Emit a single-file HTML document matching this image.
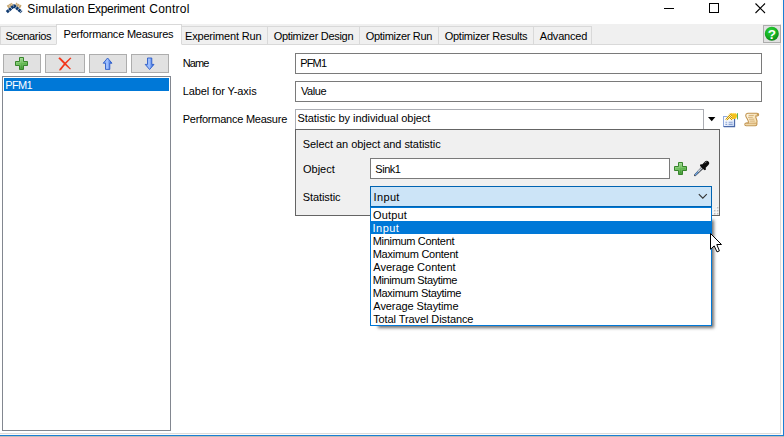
<!DOCTYPE html>
<html>
<head>
<meta charset="utf-8">
<title>Simulation Experiment Control</title>
<style>
html,body{margin:0;padding:0;}
body{width:784px;height:437px;overflow:hidden;background:#fff;position:relative;font-family:"Liberation Sans",sans-serif;font-size:11px;color:#000;}
.a{position:absolute;box-sizing:border-box;}
.t{position:absolute;white-space:nowrap;line-height:13px;height:13px;}
.tt{top:1px;font-size:12px;line-height:16px;height:16px;}
#strip{left:0;top:24px;width:781px;height:21px;background:#f0f0f0;}
.tab{position:absolute;box-sizing:border-box;top:26px;height:19px;border:1px solid #d9d9d9;border-left:none;background:#f0f0f0;}
.btn{position:absolute;box-sizing:border-box;top:54px;height:19px;background:#e1e1e1;border:1px solid #adadad;}
.inp{position:absolute;box-sizing:border-box;background:#fff;border:1px solid #7a7a7a;}
</style>
</head>
<body>
<!-- title bar -->
<svg class="a" style="left:0;top:0" width="28" height="16" viewBox="0 0 28 16">
 <path d="M7.6 7L12.6 4" stroke="#c9a873" stroke-width="3.2" fill="none" stroke-dasharray="2 0.4"/>
 <path d="M20.8 7L15.6 4" stroke="#c9a873" stroke-width="3.2" fill="none" stroke-dasharray="2 0.4"/>
 <path d="M6.8 12.1L14 5.8L21.5 12.1" fill="none" stroke="#0f3a70" stroke-width="3.1" stroke-dasharray="2.6 0.5" stroke-linejoin="round"/>
</svg>
<div class="a" id="title" style="left:0;top:0;width:300px;height:20px"><span class="t tt" style="left:27.26px;letter-spacing:0.122px">Simulation</span> <span class="t tt" style="left:87.44px;letter-spacing:-0.35px">Experiment</span> <span class="t tt" style="left:149.34px;letter-spacing:0.223px">Control</span></div>
<svg class="a" style="left:660px;top:0" width="124" height="18" viewBox="0 0 124 18">
 <path d="M4 8.5H14" stroke="#000" stroke-width="1" fill="none"/>
 <rect x="49.5" y="3.5" width="9" height="9" fill="none" stroke="#000" stroke-width="1"/>
 <path d="M95.5 3.5L105 13M105 3.5L95.5 13" stroke="#000" stroke-width="1.1" fill="none"/>
</svg>

<!-- tab strip -->
<div class="a" id="strip"></div>
<div class="a" style="left:0;top:44px;width:781px;height:1px;background:#d9d9d9"></div>
<div class="tab" style="left:0;width:57px;border-left:1px solid #d9d9d9"></div>
<div class="tab" style="left:181px;width:87px"></div>
<div class="tab" style="left:268px;width:92px"></div>
<div class="tab" style="left:360px;width:79px"></div>
<div class="tab" style="left:439px;width:95px"></div>
<div class="tab" style="left:534px;width:58px"></div>
<div class="tab" style="left:56px;top:24px;width:126px;height:21px;background:#fff;border-left:1px solid #d9d9d9;border-bottom:1px solid #fff"></div>
<div class="t" style="top:30px;left:5.54px;letter-spacing:-0.373px">Scenarios</div>
<div class="t" style="top:28px;left:63.52px;letter-spacing:-0.222px">Performance Measures</div>
<div class="t" style="top:30px;left:185.02px;letter-spacing:-0.182px">Experiment Run</div>
<div class="t" style="top:30px;left:273.64px;letter-spacing:-0.298px">Optimizer Design</div>
<div class="t" style="top:30px;left:365.84px;letter-spacing:-0.315px">Optimizer Run</div>
<div class="t" style="top:30px;left:444.64px;letter-spacing:-0.239px">Optimizer Results</div>
<div class="t" style="top:30px;left:539.76px;letter-spacing:-0.184px">Advanced</div>

<!-- help button -->
<div class="a" style="left:763px;top:25px;width:18px;height:18px;background:#e1e1e1;border:1px solid #adadad;z-index:3"></div>
<svg class="a" style="left:764px;top:26px;z-index:4" width="16" height="16" viewBox="0 0 16 16">
 <defs><radialGradient id="hg" cx="0.42" cy="0.3" r="0.75"><stop offset="0" stop-color="#2fd23a"/><stop offset="0.55" stop-color="#14b022"/><stop offset="1" stop-color="#0b7f16"/></radialGradient></defs>
 <circle cx="7.8" cy="7.8" r="7" fill="url(#hg)"/>
 <text x="7.9" y="12.6" font-family="Liberation Sans, sans-serif" font-weight="bold" font-size="13.5" fill="#fff" text-anchor="middle">?</text>
</svg>

<!-- left buttons -->
<div class="btn" style="left:3px;width:38px"></div>
<div class="btn" style="left:45px;width:40px"></div>
<div class="btn" style="left:89px;width:38px"></div>
<div class="btn" style="left:131px;width:38px"></div>
<svg class="a" style="left:15px;top:57px" width="13" height="13" viewBox="0 0 13 13">
 <defs><linearGradient id="pg" x1="0.3" y1="0" x2="0.6" y2="1"><stop offset="0" stop-color="#a9df9b"/><stop offset="0.5" stop-color="#69bd57"/><stop offset="1" stop-color="#2f8c22"/></linearGradient></defs>
 <path d="M4.5 0.5h4v4h4v4h-4v4h-4v-4h-4v-4h4z" fill="url(#pg)" stroke="#38852c" stroke-width="1"/><path d="M5.5 1.5h2v4h4v2h-4v4h-2v-4h-4v-2h4z" fill="none" stroke="#ffffff" stroke-opacity="0.10" stroke-width="1"/>
</svg>
<svg class="a" style="left:58px;top:57px" width="14" height="14" viewBox="0 0 14 14">
 <path d="M0.3 1.2L1.9 0.2Q6.6 4.6 12.9 11.7L12.1 12.6Q6 7.4 0.3 1.2z" fill="#f2361a"/><path d="M13.4 1.3L12.3 0.5Q6.6 5.4 1.5 11.9L1.1 13.5L2.9 13.2Q7.4 7 13.4 1.3z" fill="#f2361a"/>
</svg>
<svg class="a" style="left:102px;top:57px" width="12" height="13" viewBox="0 0 12 13">
 <defs><linearGradient id="ag" x1="0" y1="0" x2="1" y2="0"><stop offset="0.15" stop-color="#78a4f4"/><stop offset="0.45" stop-color="#a8c6ff"/><stop offset="0.9" stop-color="#2f66dc"/></linearGradient></defs>
 <path d="M5.6 1L10 6.2H7.8V12.4H3.5V6.2H1.2z" fill="url(#ag)" stroke="#2c5cc8" stroke-width="0.9" stroke-linejoin="round"/>
</svg>
<svg class="a" style="left:144px;top:57px" width="12" height="13" viewBox="0 0 12 13">
 <path d="M5.6 12.5L10 7.4H7.8V1H3.5V7.4H1.2z" fill="url(#ag)" stroke="#2c5cc8" stroke-width="0.9" stroke-linejoin="round"/>
</svg>

<!-- list box -->
<div class="a" style="left:2px;top:76px;width:169px;height:355px;border:1px solid #828790;background:#fff"></div>
<div class="a" style="left:4px;top:78px;width:165px;height:13px;background:#0078d7"></div>
<div class="t" style="top:79px;color:#fff;left:5.22px;letter-spacing:-0.608px">PFM1</div>

<!-- form -->
<div class="t" style="top:57px;left:182.72px;letter-spacing:-0.905px">Name</div>
<div class="t" style="top:85px;left:182.72px;letter-spacing:-0.087px">Label for Y-axis</div>
<div class="t" style="top:113px;left:182.72px;letter-spacing:-0.236px">Performance Measure</div>
<div class="inp" style="left:295px;top:53px;width:467px;height:21px"></div>
<div class="inp" style="left:295px;top:81px;width:467px;height:21px"></div>
<div class="t" style="top:57px;left:300.21px;letter-spacing:-0.842px">PFM1</div>
<div class="t" style="top:85px;left:301.02px;letter-spacing:-0.431px">Value</div>
<div class="inp" style="left:295px;top:109px;width:409px;height:21px;border-color:#abadb3"></div>
<div class="t" style="top:112px;left:297.53px;letter-spacing:-0.058px">Statistic by individual object</div>
<svg class="a" style="left:708px;top:117px" width="8" height="5" viewBox="0 0 8 5"><path d="M0 0H7.4L3.7 4.2z" fill="#000"/></svg>
<svg class="a" style="left:722px;top:112px" width="17" height="16" viewBox="0 0 17 16">
 <defs><linearGradient id="dg" x1="0" y1="0" x2="1" y2="1"><stop offset="0" stop-color="#ffffff"/><stop offset="0.55" stop-color="#edf2fc"/><stop offset="1" stop-color="#b9cdf0"/></linearGradient>
 <pattern id="chk" width="2" height="2" patternUnits="userSpaceOnUse"><rect width="2" height="2" fill="#fdeea0"/><rect width="1" height="1" fill="#c8920c"/><rect x="1" y="1" width="1" height="1" fill="#c8920c"/></pattern></defs>
 <rect x="1.5" y="4.5" width="11" height="10" fill="url(#dg)" stroke="#8fa9de" stroke-width="1"/>
 <path d="M1.8 14.6H12.6V5" fill="none" stroke="#4a68a8" stroke-width="1.1"/>
 <path d="M3.4 10.2H5.2M6.6 10.2H10.6M3.4 12.4H5.2M6.6 12.4H10.6" stroke="#8aa3d4" stroke-width="1.1" fill="none"/>
 <path d="M3.2 7.6L7.4 1.8L10 1.4L12 4L12.8 6.6L10.9 7L9.5 8.6L7.8 6.6L5.2 8.6z" fill="url(#chk)"/>
 <path d="M7.6 1.7Q10 0.8 13.2 1.1Q15.1 1.6 15.1 3.8Q15 6.4 12.8 7Q10.8 7.4 10 6.4Q10.6 4.8 9.8 3.4Q9 2.3 7.6 1.7z" fill="#f4c21c"/>
 <path d="M9.8 1.7Q11.6 1.1 13.4 1.7" stroke="#fbe588" stroke-width="0.9" fill="none"/>
 <rect x="15" y="1.2" width="1" height="6.2" fill="#58b45c"/>
</svg>
<svg class="a" style="left:744px;top:112px" width="16" height="15" viewBox="0 0 16 15">
 <defs><linearGradient id="sg" x1="0" y1="0" x2="1" y2="0.3"><stop offset="0" stop-color="#fffbee"/><stop offset="1" stop-color="#f6ddab"/></linearGradient></defs>
 <path d="M3.8 1.3H13Q14.7 1.3 14.7 2.7Q14.6 4 13 3.9L11.8 3.8Q11.6 5.6 12.6 7.4Q13.4 9 12.9 10.7V12.4Q12.8 13.7 11.4 13.7H2.2Q0.8 13.6 0.8 12.4Q0.8 11.1 2.2 11H4.3Q4.8 9.4 3.7 7.7Q1.6 5.2 1.7 3.3Q1.9 1.5 3.8 1.3z" fill="url(#sg)" stroke="#c0924c" stroke-width="1.05" stroke-linejoin="round"/>
 <path d="M2.2 11.2H12.8" stroke="#c89a56" stroke-width="0.9" fill="none"/>
 <path d="M1.6 12.6H11.8" stroke="#e9cf9c" stroke-width="0.8" fill="none"/>
 <circle cx="13.4" cy="2.7" r="0.7" fill="#c0924c"/>
 <path d="M4.6 3.4H9.8M4 5.3H8.8M5 7.2H10.2M5.6 9.1H10.8" stroke="#cfa96c" stroke-width="0.9" fill="none"/>
</svg>

<!-- popup panel -->
<div class="a" style="left:295px;top:129px;width:425px;height:87px;background:#f0f0f0;border:1px solid #646464"></div>
<div class="t" style="top:138px;left:302.73px;letter-spacing:-0.05px">Select an object and statistic</div>
<div class="t" style="top:163px;left:302.94px;letter-spacing:0.022px">Object</div>
<div class="t" style="top:191px;left:302.73px;letter-spacing:-0.082px">Statistic</div>
<div class="inp" style="left:370px;top:158px;width:300px;height:21px"></div>
<div class="t" style="top:163px;left:375.34px;letter-spacing:-0.489px">Sink1</div>
<svg class="a" style="left:674px;top:162px" width="13" height="13" viewBox="0 0 13 13">
 <path d="M4.5 0.5h4v4h4v4h-4v4h-4v-4h-4v-4h4z" fill="url(#pg)" stroke="#38852c" stroke-width="1"/><path d="M5.5 1.5h2v4h4v2h-4v4h-2v-4h-4v-2h4z" fill="none" stroke="#ffffff" stroke-opacity="0.10" stroke-width="1"/>
</svg>
<svg class="a" style="left:693px;top:160px" width="17" height="17" viewBox="0 0 17 17">
 <path d="M1.3 14.6L8.2 6.9L10.2 8.9L2.6 15.9Q1.6 16.4 1.1 15.8Q0.8 15.2 1.3 14.6z" fill="#3a3f48"/>
 <path d="M2.4 14.7L5.6 11.3" stroke="#6ea4e0" stroke-width="1.3" fill="none" stroke-linecap="round"/>
 <path d="M5.6 11.3L8.9 7.9" stroke="#cfd6de" stroke-width="1.3" fill="none" stroke-linecap="round"/>
 <path d="M8.2 5.4L11.8 9" stroke="#0c0c0c" stroke-width="2.4" fill="none" stroke-linecap="round"/>
 <path d="M10.8 6.2L13.7 3.3" stroke="#0c0c0c" stroke-width="4.8" fill="none" stroke-linecap="round"/>
 <path d="M12 2.8L13.4 1.9" stroke="#707070" stroke-width="1" fill="none" stroke-linecap="round"/>
</svg>
<svg class="a" style="left:711px;top:206px" width="9" height="10" viewBox="0 0 9 10">
 <g fill="#bdbdbd"><rect x="6" y="1" width="1.4" height="1.4"/><rect x="3" y="4" width="1.4" height="1.4"/><rect x="6" y="4" width="1.4" height="1.4"/><rect x="3" y="7" width="1.4" height="1.4"/><rect x="6" y="7" width="1.4" height="1.4"/></g>
 <g fill="#ffffff"><rect x="5.2" y="0.2" width="1" height="1"/><rect x="2.2" y="3.2" width="1" height="1"/><rect x="5.2" y="3.2" width="1" height="1"/><rect x="2.2" y="6.2" width="1" height="1"/><rect x="5.2" y="6.2" width="1" height="1"/></g>
</svg>
<div class="a" style="left:370px;top:186px;width:342px;height:21px;background:#cce4f7;border:1px solid #0063b1"></div>
<div class="t" style="top:191px;left:373.52px;letter-spacing:0.359px">Input</div>
<svg class="a" style="left:698px;top:193px" width="10" height="7" viewBox="0 0 10 7"><path d="M0.8 1.2L4.8 5.2L8.8 1.2" stroke="#333" stroke-width="1.1" fill="none"/></svg>

<!-- dropdown list -->
<div class="a" style="left:376px;top:218px;width:336px;height:108px;background:#777;box-shadow:2px 2px 3px 0 rgba(0,0,0,0.56)"></div>
<div class="a" style="left:370px;top:207px;width:342px;height:119px;background:#fff;border:1px solid #0078d7"></div>
<div class="a" style="left:371px;top:221px;width:341px;height:13px;background:#0078d7"></div>
<div class="t" style="top:209px;left:373.04px;letter-spacing:0.144px">Output</div>
<div class="t" style="top:222px;color:#fff;left:372.62px;letter-spacing:0.434px">Input</div>
<div class="t" style="top:235px;left:372.72px;letter-spacing:-0.315px">Minimum Content</div>
<div class="t" style="top:248px;left:372.72px;letter-spacing:-0.258px">Maximum Content</div>
<div class="t" style="top:261px;left:373.36px;letter-spacing:-0.011px">Average Content</div>
<div class="t" style="top:274px;left:372.72px;letter-spacing:-0.381px">Minimum Staytime</div>
<div class="t" style="top:287px;left:372.72px;letter-spacing:-0.32px">Maximum Staytime</div>
<div class="t" style="top:300px;left:373.36px;letter-spacing:-0.097px">Average Staytime</div>
<div class="t" style="top:313px;left:373.14px;letter-spacing:-0.088px">Total Travel Distance</div>

<!-- cursor -->
<svg class="a" style="left:710px;top:233px" width="13" height="20" viewBox="0 0 13 20">
 <path d="M0.5 0.5V16.3L4.2 12.9L7 18.9L9.4 17.9L6.8 11.5H11.5z" fill="#fff" stroke="#000" stroke-width="1" stroke-linejoin="round"/>
</svg>

<!-- window borders -->
<div class="a" style="left:780px;top:24px;width:1px;height:410px;background:#dcdcdc"></div>
<div class="a" style="left:781px;top:0;width:2px;height:435px;background:#fdfaf6"></div>
<div class="a" style="left:783px;top:0;width:1px;height:436px;background:#1a7fd4"></div>
<div class="a" style="left:0;top:433px;width:781px;height:1px;background:#dcdcdc"></div>
<div class="a" style="left:0;top:434px;width:783px;height:1px;background:#fdfaf6"></div>
<div class="a" style="left:0;top:435px;width:784px;height:1px;background:#1a7fd4"></div>
<div class="a" style="left:0;top:436px;width:784px;height:1px;background:#c4bcb4"></div>
</body>
</html>
